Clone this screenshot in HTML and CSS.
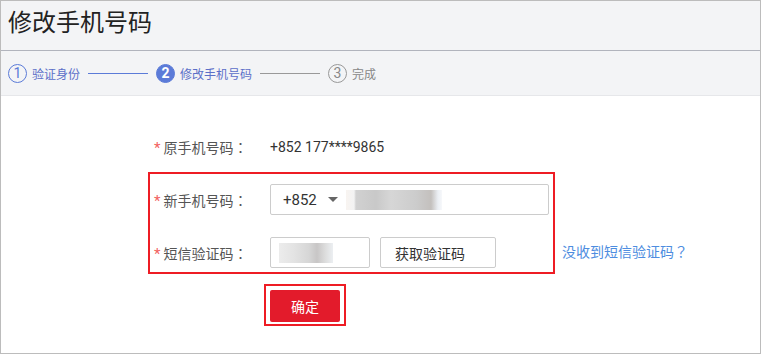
FILE: index.html
```html
<!DOCTYPE html>
<html>
<head lang="zh-CN">
    <meta charset="UTF-8">
    <title>修改手机号码</title>
    <link rel="stylesheet" href="styles.css">
</head>
<body>
<div class="frame">
    <div class="title">修改手机号码</div>
    <div class="steps">
        <span class="num done">1</span><span class="step-txt done">验证身份</span>
        <span class="line done"></span>
        <span class="num active">2</span><span class="step-txt done">修改手机号码</span>
        <span class="line"></span>
        <span class="num">3</span><span class="step-txt">完成</span>
    </div>
    <div class="form">
        <div class="row first">
            <label class="lab"><i>*</i>原手机号码<b>：</b></label>
            <span class="val">+852 177****9865</span>
        </div>
        <div class="boxrow">
            <div class="mark">
                <div class="row">
                    <label class="lab"><i>*</i>新手机号码<b>：</b></label>
                    <div class="input wide">
                        <span class="code">+852</span><span class="arrow"></span>
                        <span class="blur blur-a"></span>
                    </div>
                </div>
                <div class="row second">
                    <label class="lab"><i>*</i>短信验证码<b>：</b></label>
                    <div class="input short"><span class="blur blur-b"></span></div>
                    <button class="btn-code">获取验证码</button>
                </div>
            </div>
            <a class="link" href="#">没收到短信验证码<b>？</b></a>
        </div>
        <div class="ok-wrap">
            <button class="ok">确定</button>
        </div>
    </div>
</div>
</body>
</html>
```

FILE: styles.css
```css
* {
    padding: 0;
    margin: 0;
    box-sizing: border-box;
}
body {
    font-family: Roboto, "Noto Sans CJK SC", sans-serif;
    background: #fff;
}
.frame {
    width: 761px;
    height: 354px;
    border: 1px solid #bcbcbc;
}
.title {
    height: 50px;
    padding: 6px 0 0 7px;
    font-size: 24px;
    line-height: 32px;
    color: #222;
    background: #f3f4f6;
    border-bottom: 1px solid #b1b4bd;
}
.steps {
    height: 45px;
    display: flex;
    align-items: center;
    padding-left: 7px;
    background: #f3f4f6;
    border-bottom: 1px solid #e6e7ea;
    font-size: 12px;
    color: #888;
}
.num {
    width: 19px;
    height: 19px;
    border: 1px solid #999;
    border-radius: 50%;
    font-size: 14px;
    line-height: 17px;
    text-align: center;
    color: #888;
    margin-right: 5px;
}
.num.done {
    border-color: #5b7bd8;
    color: #5b7bd8;
}
.num.active {
    background: #5b7bd8;
    border-color: #5b7bd8;
    color: #fff;
    font-weight: bold;
}
.step-txt.done {
    color: #5b6fc8;
}
.line {
    width: 60px;
    height: 1px;
    background: #999;
    margin: 0 8px 0 8px;
}
.line.done {
    background: #5b7bd8;
}
.form {
    padding: 35px 0 0 147px;
    font-size: 14px;
    color: #555;
}
.row {
    display: flex;
    align-items: center;
    height: 31px;
}
.row.first {
    padding-left: 2px;
    margin-bottom: 10px;
}
.row.second {
    margin-top: 22px;
}
.lab {
    width: 120px;
    padding-left: 4px;
}
.lab i {
    font-style: normal;
    font-size: 15px;
    color: #f26060;
    margin-right: 3px;
}
/* 全角冒号居中 */
.lab b,
.link b {
    font-weight: normal;
    font-family: "Noto Sans CJK TC", sans-serif;
}
.val {
    color: #333;
}
.boxrow {
    display: flex;
    align-items: flex-end;
}
.mark {
    width: 407px;
    border: 2px solid #ee1c24;
    padding: 10px 4px 4px 0;
}
.input {
    height: 31px;
    border: 1px solid #ccc;
    border-radius: 2px;
    display: flex;
    align-items: center;
    background: #fff;
}
.input.wide {
    flex: 1;
    padding-left: 12px;
    color: #333;
    font-size: 15px;
}
.input.short {
    width: 100px;
    padding-left: 8px;
}
.arrow {
    width: 0;
    height: 0;
    border-left: 5px solid transparent;
    border-right: 5px solid transparent;
    border-top: 5px solid #666;
    margin: 0 8px 0 11px;
}
.blur {
    display: block;
    height: 20px;
}
.blur-a {
    width: 96px;
    background:
        linear-gradient(to right, #f7f2ee 0, #f1f1f1 8px, #c9c9c9 10px, #bfbfbf 30px, #cfcfcf 45px, #c3c3c3 70px, #b9b5b2 85px, #e8ecf2 92px, #f5f7fa 96px);
    opacity: 0.85;
}
.blur-b {
    width: 54px;
    background: linear-gradient(to right, #ececec 0, #e3e3e3 15px, #d6d6d6 30px, #c8c6c6 38px, #dcdcdc 46px, #eceff2 54px);
}
.btn-code {
    width: 116px;
    height: 31px;
    margin-left: 10px;
    padding-left: 14px;
    text-align: left;
    border: 1px solid #ccc;
    border-radius: 2px;
    background: #fff;
    font-family: inherit;
    font-size: 14px;
    color: #333;
}
.link {
    margin: 0 0 12px 7px;
    line-height: 20px;
    color: #4e8de0;
    text-decoration: none;
}
.ok-wrap {
    margin: 10px 0 0 116px;
    width: 82px;
    height: 42px;
    border: 2px solid #ee1c24;
    padding: 4px;
}
.ok {
    display: block;
    width: 70px;
    height: 32px;
    border: 0;
    border-radius: 2px;
    background: #e31b2b;
    color: #fff;
    font-family: inherit;
    font-size: 14px;
}
```
